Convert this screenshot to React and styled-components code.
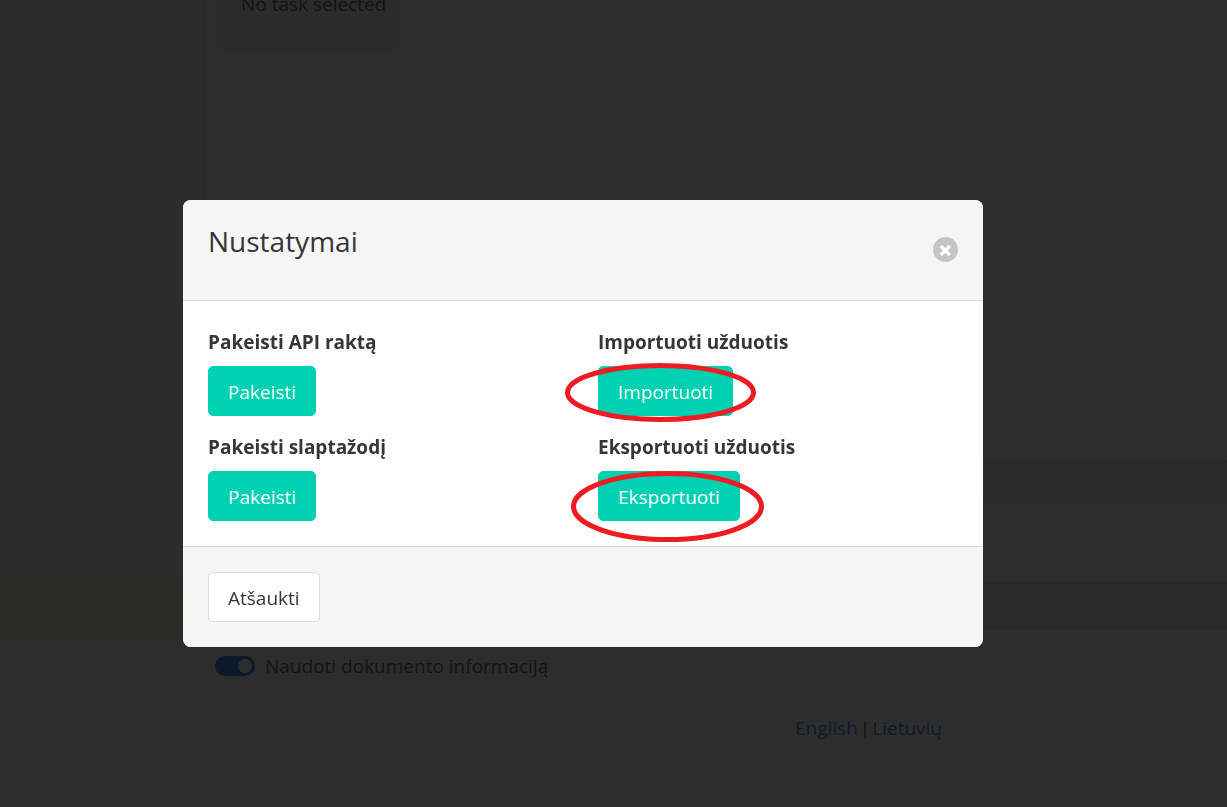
import React from "react";
import styled, { createGlobalStyle } from "styled-components";

const GlobalStyle = createGlobalStyle`
  *, *::before, *::after { box-sizing: border-box; }
  html, body { margin: 0; padding: 0; }
  body {
    background: #fff;
    color: #4a4a4a;
    font-family: "Open Sans", "Noto Sans", sans-serif;
    font-size: 19px;
    line-height: 30px;
    overflow: hidden;
  }
  p, h1, h2 { margin: 0; }
  button { font: inherit; }
`;

const Page = styled.div`
  display: flex;
  align-items: stretch;
  min-height: 100vh;
  overflow: hidden;
`;

const Sidebar = styled.aside`
  flex: 0 0 206px;
  display: flex;
  flex-direction: column;
`;

const TaskList = styled.div`
  height: 578px;
  background: #f8f8f8;
  border-right: 1px solid #dbdbdb;
  box-shadow: inset -18px 0 0 #f0f0f0;
`;

const ActiveTask = styled.div`
  height: 61px;
  background: #f6f8cc;
  border-top: 3px solid #ececec;
`;

const SidebarEnd = styled.div`
  height: 106px;
  background: #fafafa;
`;

const Main = styled.main`
  flex: 1;
  min-width: 0;
  display: flex;
  flex-direction: column;
`;

const Workspace = styled.section`
  display: flex;
  align-items: flex-start;
  height: 461px;
  padding-left: 12px;
`;

const EmptyTask = styled.div`
  margin-top: -31px;
  padding: 20px 12px 32px 23px;
  min-width: 181px;
  border-radius: 12px;
  background: #f2f2f2;
  white-space: nowrap;
`;

const Composer = styled.section`
  height: 121px;
  border-top: 1px solid #dbdbdb;
  background: linear-gradient(#f2f2f2, #fafafa 40px);
`;

const StatusBar = styled.div`
  height: 48px;
  background: #ebebeb;
  border-top: 1px solid #dbdbdb;
  border-bottom: 1px solid #dbdbdb;
`;

const Option = styled.label`
  display: flex;
  align-items: center;
  gap: 10px;
  margin-top: 21px;
  padding-left: 9px;
`;

const Toggle = styled.input`
  appearance: none;
  display: flex;
  align-items: center;
  justify-content: flex-end;
  width: 40px;
  height: 20px;
  margin: 0;
  padding: 3px;
  border-radius: 10px;
  background: #1478f0;
  &::before {
    content: "";
    width: 14px;
    height: 14px;
    border-radius: 50%;
    background: #fff;
  }
`;

const Languages = styled.nav`
  display: flex;
  justify-content: flex-end;
  gap: 2px;
  margin-top: 32px;
  padding-right: 285px;
`;

const LanguageLink = styled.a`
  color: #3273dc;
  text-decoration: none;
`;

const Overlay = styled.div`
  position: fixed;
  inset: 0;
  display: flex;
  align-items: center;
  justify-content: center;
  padding: 40px 61px 0 0;
  background: rgba(10, 10, 10, 0.86);
`;

const Dialog = styled.div`
  display: flex;
  flex-direction: column;
  width: 100%;
  max-width: 800px;
  border-radius: 8px;
  background: #fff;
  color: #363636;
`;

const DialogHeader = styled.header`
  display: flex;
  align-items: center;
  justify-content: space-between;
  padding: 24px 25px 26px;
  border-bottom: 1px solid #dbdbdb;
  border-radius: 8px 8px 0 0;
  background: #f5f5f5;
`;

const DialogTitle = styled.h1`
  padding-bottom: 16px;
  font-size: 28px;
  font-weight: 400;
  line-height: 34px;
`;

const CloseButton = styled.button`
  display: flex;
  width: 25px;
  height: 25px;
  padding: 0;
  border: 0;
  border-radius: 50%;
  background: #c4c4c4;
  cursor: pointer;
`;

const DialogBody = styled.section`
  display: grid;
  grid-template-columns: 1fr 1fr;
  gap: 15px 30px;
  padding: 25px;
`;

const Setting = styled.div`
  display: flex;
  flex-direction: column;
  align-items: flex-start;
  gap: 8px;
`;

const SettingTitle = styled.h2`
  font-size: 19px;
  font-weight: 700;
  line-height: 32px;
`;

const ButtonWrap = styled.div`
  position: relative;
  display: flex;
`;

const Button = styled.button`
  height: 50px;
  padding: 2px 19px 0;
  border: 1px solid ${(p) => (p.$primary ? "#00d1b2" : "#dbdbdb")};
  border-radius: 5px;
  background: ${(p) => (p.$primary ? "#00d1b2" : "#fff")};
  color: ${(p) => (p.$primary ? "#fff" : "#363636")};
  cursor: pointer;
`;

const Ring = styled.svg`
  position: absolute;
  left: ${(p) => p.$left}px;
  top: ${(p) => p.$top}px;
  pointer-events: none;
`;

const DialogFooter = styled.footer`
  display: flex;
  padding: 25px;
  border-top: 1px solid #dbdbdb;
  border-radius: 0 0 8px 8px;
  background: #f5f5f5;
`;

const settings = [
  { title: "Pakeisti API raktą", action: "Pakeisti" },
  {
    title: "Importuoti užduotis",
    action: "Importuoti",
    ring: { left: -33, top: -3, width: 191, height: 59 },
  },
  { title: "Pakeisti slaptažodį", action: "Pakeisti" },
  {
    title: "Eksportuoti užduotis",
    action: "Eksportuoti",
    ring: { left: -27, top: 0, width: 193, height: 71 },
  },
];

function HighlightRing({ left, top, width, height }) {
  return (
    <Ring $left={left} $top={top} width={width} height={height} aria-hidden="true">
      <ellipse
        cx={width / 2}
        cy={height / 2}
        rx={width / 2 - 2.5}
        ry={height / 2 - 2.5}
        fill="none"
        stroke="#ed1c24"
        strokeWidth="5"
      />
    </Ring>
  );
}

export default function App() {
  return (
    <>
      <GlobalStyle />
      <Page>
        <Sidebar>
          <TaskList />
          <ActiveTask />
          <SidebarEnd />
        </Sidebar>
        <Main>
          <Workspace>
            <EmptyTask>No task selected</EmptyTask>
          </Workspace>
          <Composer />
          <StatusBar />
          <Option>
            <Toggle type="checkbox" defaultChecked />
            Naudoti dokumento informaciją
          </Option>
          <Languages>
            <LanguageLink href="#en">English</LanguageLink>
            <span>|</span>
            <LanguageLink href="#lt">Lietuvių</LanguageLink>
          </Languages>
        </Main>
      </Page>
      <Overlay>
        <Dialog role="dialog" aria-modal="true" aria-labelledby="settings-title">
          <DialogHeader>
            <DialogTitle id="settings-title">Nustatymai</DialogTitle>
            <CloseButton type="button" aria-label="Uždaryti">
              <svg width="25" height="25" viewBox="0 0 25 25" aria-hidden="true">
                <path d="M7.8 9 16.8 18M16.8 9 7.8 18" stroke="#fff" strokeWidth="3.4" />
              </svg>
            </CloseButton>
          </DialogHeader>
          <DialogBody>
            {settings.map((s) => (
              <Setting key={s.title}>
                <SettingTitle>{s.title}</SettingTitle>
                <ButtonWrap>
                  <Button type="button" $primary>
                    {s.action}
                  </Button>
                  {s.ring && <HighlightRing {...s.ring} />}
                </ButtonWrap>
              </Setting>
            ))}
          </DialogBody>
          <DialogFooter>
            <Button type="button">Atšaukti</Button>
          </DialogFooter>
        </Dialog>
      </Overlay>
    </>
  );
}
